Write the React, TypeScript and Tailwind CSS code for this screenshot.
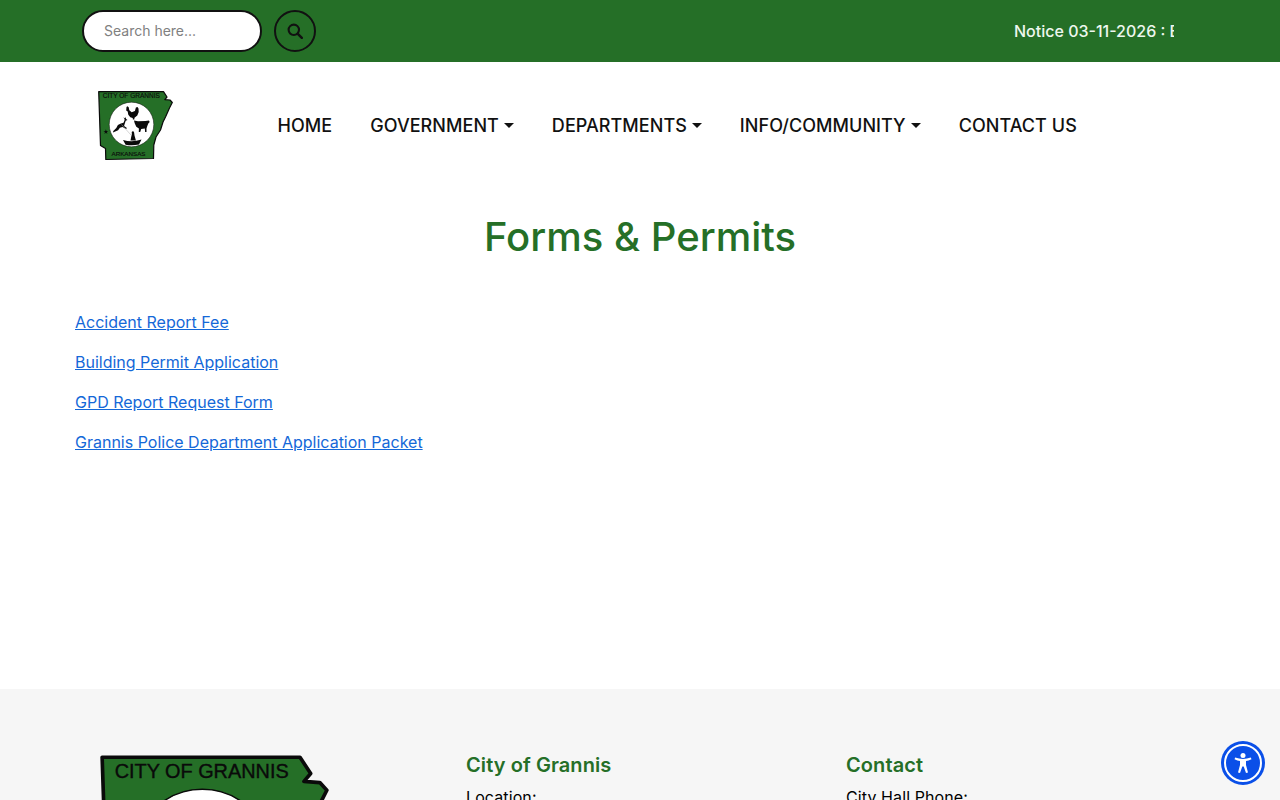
import React from "react";

function Logo({ className }: { className: string }) {
  return (
    <svg viewBox="0 0 75 70" className={className}>
      <path
        d="M0.7 0.7 L65.5 0.7 L69 6 L66.8 8.6 L72 9 L74.3 11.5 L71.5 17 L67.5 26 L65 31 L62.5 39 L58 46 L55.8 54 L55.5 67.5 L7.8 68.5 L7.5 57.5 L2.5 54.5 Z"
        fill="#256f27"
        stroke="#0a0a0a"
        strokeWidth="1.2"
        strokeLinejoin="round"
      />
      <text x="4.8" y="7.4" textLength="57" lengthAdjust="spacingAndGlyphs" fontFamily="'Liberation Sans', sans-serif" fontSize="6.4" fill="#0a0a0a" stroke="#0a0a0a" strokeWidth="0.12">CITY OF GRANNIS</text>
      <text x="13.5" y="65" textLength="34" lengthAdjust="spacingAndGlyphs" fontFamily="'Liberation Sans', sans-serif" fontSize="5.8" fill="#0a0a0a" stroke="#0a0a0a" strokeWidth="0.12">ARKANSAS</text>
      <circle cx="33.5" cy="33.5" r="22.3" fill="#fff" stroke="#0a0a0a" strokeWidth="0.5" />
      <path d="M5.5 40 l1.8 0 l.6-1.8 l.6 1.8 l1.8 0 l-1.5 1.1 l.6 1.8 l-1.5-1.1 l-1.5 1.1 l.6-1.8 Z" fill="#0a0a0a" />
      <g fill="#0a0a0a">
        <path d="M28.5 16 l1 -.8 l1.2 1 l.6 3 l2.4 2 l3.2-1.2 l1-3.5 l1.6-.5 l1 1.5 l.2 3.5 l-1.4 3.5 l-2.8 2.2 l-.2 1.8 l-1.4 0 l-.2-1.6 l-2.4-.6 l-2-2.6 l-.6-3.2 l-1.5-.9 Z" />
        <path d="M36 29.5 l4 .8 l7.5-.3 l3.4-.6 l.8 1.6 l-1.4 1.6 l-1 2.5 l-.8 2.4 l0 3.5 l-1.4 0 l-.3-3.5 l-3.6 .4 l-1 3.1 l-1.4 0 l.1-3.5 l-2.6-1.8 l-1.6-3.4 Z" />
        <path d="M15 41.5 l.3-1.6 l3-2.8 l1.6-3.2 l3-1.4 l2.6-.8 l1.2-3 l-1.2-2.4 l1.6 1.2 l.6-1.8 l.4 2.4 l1.4 .9 l-1.8 .8 l-1.2 3.6 l-.4 1.6 l2.8 2 l-.8 .9 l-3.6-1.8 l-2.6 .6 l-1.8 2.6 Z" />
        <path d="M25 49 q9 2.6 18.5 -.4 l-2.5 5 q-7 1.4-13.4 .2 Z" />
        <path d="M32.5 49.5 l.8-4 l.6-2.5 l-.2-2 l1.4-1 l1 1.4 l.4 3 l1.4 5 Z" />
      </g>
      <path d="M23.5 33.5 L33 44" stroke="#aaa" strokeWidth="0.5" />
    </svg>
  );
}

function Caret() {
  return <span className="ml-[5px] inline-block h-0 w-0 border-x-[5px] border-t-[5px] border-x-transparent border-t-[#111]" />;
}

function NavItem({ label, caret }: { label: string; caret?: boolean }) {
  return (
    <a className="flex items-center whitespace-nowrap text-[18px] font-[550] tracking-[0.05px] text-[#111]">
      {label}
      {caret && <Caret />}
    </a>
  );
}

const links = [
  "Accident Report Fee",
  "Building Permit Application",
  "GPD Report Request Form",
  "Grannis Police Department Application Packet",
];

export default function App() {
  return (
    <div className="relative h-[800px] overflow-hidden bg-white font-['Inter',sans-serif] text-[16px] text-black">
      <header className="flex h-[62px] items-center bg-[#256f27] pl-[82px]">
        <input
          placeholder="Search here..."
          className="h-[42px] w-[180px] rounded-full border-2 border-[#111] bg-white px-5 pb-[2px] text-[14px] outline-none placeholder:text-[#808080]"
        />
        <button className="ml-3 flex h-[42px] w-[42px] items-center justify-center rounded-full border-2 border-[#111]">
          <svg viewBox="0 0 16 16" className="h-4 w-4" fill="none" stroke="#111">
            <circle cx="6.8" cy="6.8" r="5.2" strokeWidth="2.1" />
            <path d="M10.8 10.8 L14.8 14.8" strokeWidth="2.5" strokeLinecap="round" />
          </svg>
        </button>
        <div className="ml-[698px] w-[160px] overflow-hidden whitespace-nowrap font-[550] text-[#eef7ee]">
          Notice 03-11-2026 : Emergency Meeting
        </div>
      </header>

      <nav className="flex h-[128px] items-center pl-[98px]">
        <Logo className="h-[70px] w-[75px]" />
        <div className="ml-[104.5px] flex items-center gap-[38px] pb-[2px]">
          <NavItem label="HOME" />
          <NavItem label="GOVERNMENT" caret />
          <NavItem label="DEPARTMENTS" caret />
          <NavItem label="INFO/COMMUNITY" caret />
          <NavItem label="CONTACT US" />
        </div>
      </nav>

      <main className="h-[499px] px-[75px]">
        <h1 className="pt-[21px] text-center text-[40px] leading-[52px] font-medium text-[#256f27]">Forms &amp; Permits</h1>
        <ul className="mt-[47px] flex flex-col gap-4">
          {links.map((l) => (
            <li key={l} className="leading-6">
              <a className="text-[#1468d8] underline">{l}</a>
            </li>
          ))}
        </ul>
      </main>

      <footer className="flex h-[300px] bg-[#f6f6f6] pt-[66px]">
        <div className="w-[466px] pl-[100px]">
          <Logo className="h-[214px] w-[229px]" />
        </div>
        <div className="w-[380px]">
          <h5 className="text-[20px] leading-5 font-semibold tracking-[0.08px] text-[#256f27]">City of Grannis</h5>
          <p className="mt-[10px] leading-6 tracking-[0.1px]">Location:</p>
        </div>
        <div>
          <h5 className="text-[20px] leading-5 font-semibold tracking-[0.08px] text-[#256f27]">Contact</h5>
          <p className="mt-[10px] leading-6 tracking-[0.1px]">City Hall Phone:</p>
        </div>
      </footer>

      <button className="absolute top-[741px] left-[1221px] flex h-11 w-11 items-center justify-center rounded-full bg-[#0a4fe8]">
        <span className="flex h-[38px] w-[38px] items-center justify-center rounded-full border-2 border-white">
          <svg viewBox="0 0 24 24" className="h-6 w-6" fill="#fff">
            <circle cx="12" cy="4.5" r="2.5" />
            <path d="M3.5 8.2 L4.2 6.6 Q8 8 12 8 T19.8 6.6 L20.5 8.2 Q17.5 9.6 15 10 L15 14 L17 21.5 L15 22 L12.7 15.5 L11.3 15.5 L9 22 L7 21.5 L9 14 L9 10 Q6.5 9.6 3.5 8.2 Z" />
          </svg>
        </span>
      </button>
    </div>
  );
}
